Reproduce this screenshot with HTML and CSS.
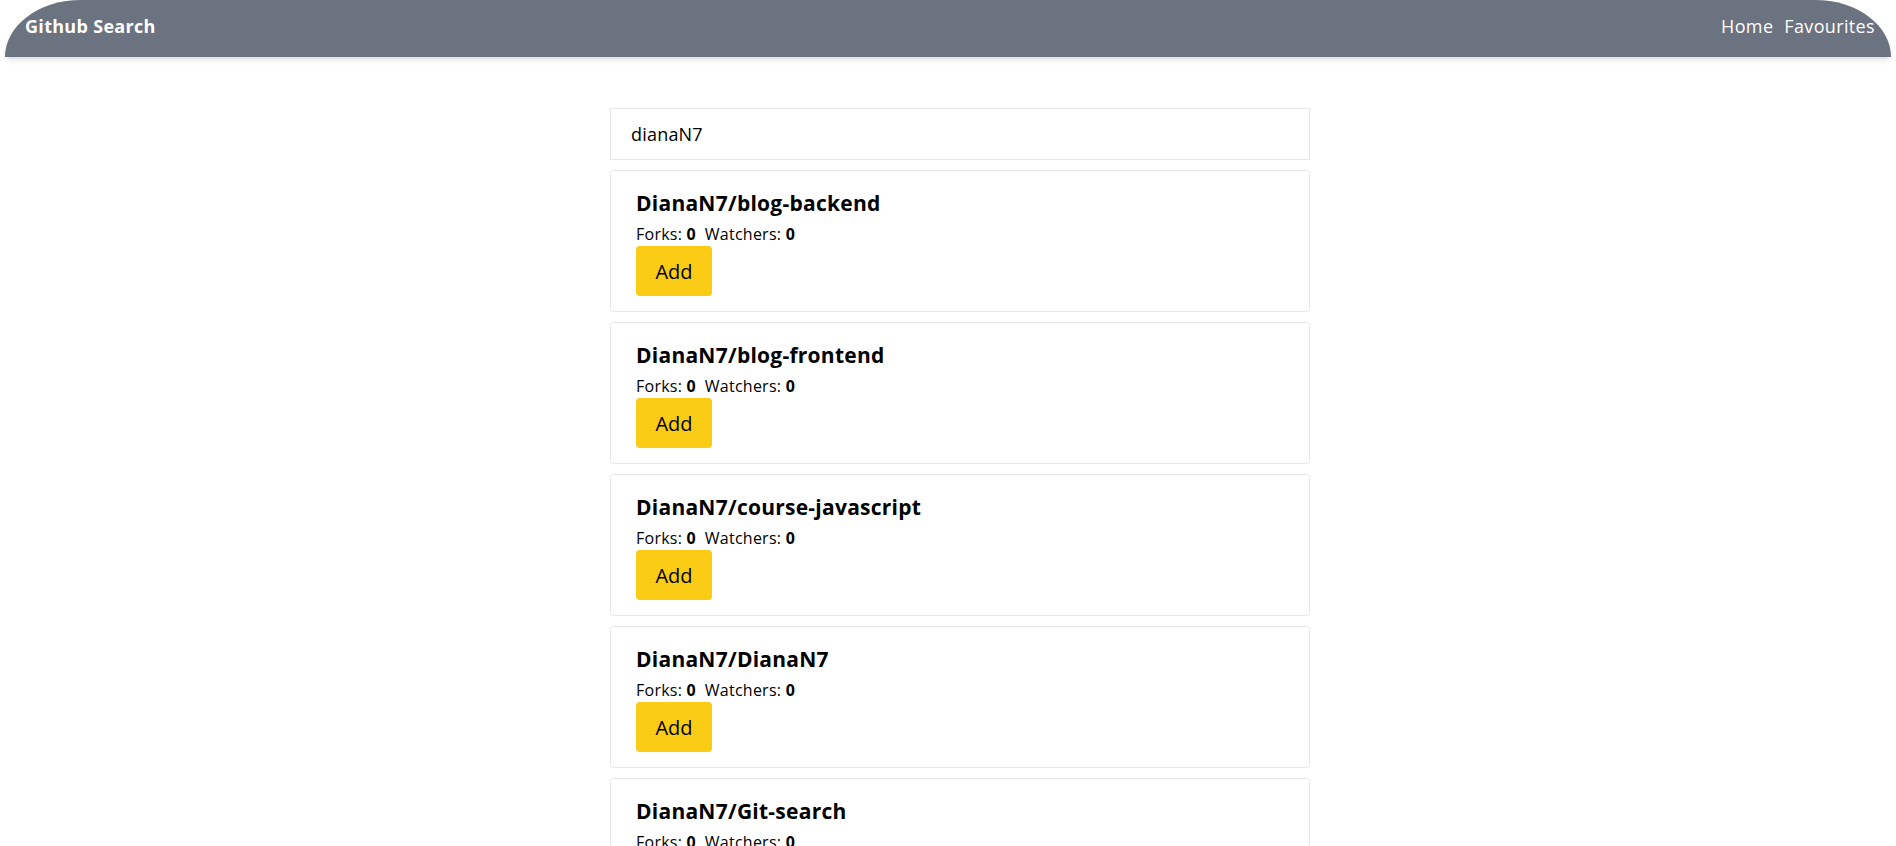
FILE: index.html
```html
<!DOCTYPE html>
<html lang="en">
<head>
<meta charset="utf-8">
<title>Github Search</title>
<link rel="stylesheet" href="styles.css">
</head>
<body>
<header class="navbar">
  <a class="brand" href="#">Github Search</a>
  <nav class="nav-links">
    <a class="nav-link" href="#">Home</a>
    <a class="nav-link" href="#">Favourites</a>
  </nav>
</header>
<main class="page">
  <div class="column">
    <input class="search" type="text" value="dianaN7">
    <div class="repo-card">
      <h2 class="repo-title">DianaN7/blog-backend</h2>
      <p class="repo-stats">Forks: <b>0</b>&nbsp; Watchers: <b>0</b></p>
      <button class="add-btn">Add</button>
    </div>
    <div class="repo-card">
      <h2 class="repo-title">DianaN7/blog-frontend</h2>
      <p class="repo-stats">Forks: <b>0</b>&nbsp; Watchers: <b>0</b></p>
      <button class="add-btn">Add</button>
    </div>
    <div class="repo-card">
      <h2 class="repo-title">DianaN7/course-javascript</h2>
      <p class="repo-stats">Forks: <b>0</b>&nbsp; Watchers: <b>0</b></p>
      <button class="add-btn">Add</button>
    </div>
    <div class="repo-card">
      <h2 class="repo-title">DianaN7/DianaN7</h2>
      <p class="repo-stats">Forks: <b>0</b>&nbsp; Watchers: <b>0</b></p>
      <button class="add-btn">Add</button>
    </div>
    <div class="repo-card">
      <h2 class="repo-title">DianaN7/Git-search</h2>
      <p class="repo-stats">Forks: <b>0</b>&nbsp; Watchers: <b>0</b></p>
      <button class="add-btn">Add</button>
    </div>
  </div>
</main>
</body>
</html>
```
FILE: styles.css
```css
html {
  overflow: hidden;
}
body {
  margin: 0;
  font-family: "Open Sans", "Noto Sans", sans-serif;
  color: #000;
  background: #fff;
}
.navbar {
  margin: 0 5px;
  height: 57px;
  box-sizing: border-box;
  padding: 14px 16px 0 20px;
  background: #6b7280;
  border-top-left-radius: 76px 57px;
  border-top-right-radius: 76px 57px;
  box-shadow: 0 4px 6px -1px rgba(0, 0, 0, 0.1), 0 2px 4px -2px rgba(0, 0, 0, 0.1);
  display: flex;
  justify-content: space-between;
  align-items: flex-start;
  position: relative;
  z-index: 1;
}
.brand {
  color: #fff;
  text-decoration: none;
  font-size: 18px;
  font-weight: 700;
  letter-spacing: 0.3px;
}
.nav-links {
  display: flex;
  gap: 11px;
}
.nav-link {
  color: #fff;
  text-decoration: none;
  font-size: 18px;
  letter-spacing: 0.35px;
}
.page {
  padding: 51px 0 40px 24px;
}
.column {
  width: 700px;
  margin: 0 auto;
  display: flex;
  flex-direction: column;
  gap: 10px;
}
.search {
  box-sizing: border-box;
  height: 52px;
  width: 100%;
  margin: 0;
  padding: 0 20px;
  border: 1px solid #e5e7eb;
  border-radius: 0;
  font-family: inherit;
  font-size: 18px;
  letter-spacing: 0.2px;
  color: #000;
  outline: none;
}
.repo-card {
  border: 1px solid #e5e7eb;
  border-radius: 4px;
  padding: 18px 25px 15px;
  display: flex;
  flex-direction: column;
  align-items: flex-start;
}
.repo-title {
  margin: 0 0 5px;
  font-size: 21px;
  line-height: 28px;
  font-weight: 700;
  letter-spacing: 0.25px;
}
.repo-stats {
  margin: 0;
  font-size: 16px;
  line-height: 24px;
  letter-spacing: 0.25px;
}
.repo-stats b {
  font-weight: 700;
}
.add-btn {
  width: 76px;
  height: 50px;
  padding: 0;
  border: none;
  border-radius: 4px;
  background: #facc15;
  color: #000;
  font-family: inherit;
  font-size: 20px;
  cursor: pointer;
}
```
